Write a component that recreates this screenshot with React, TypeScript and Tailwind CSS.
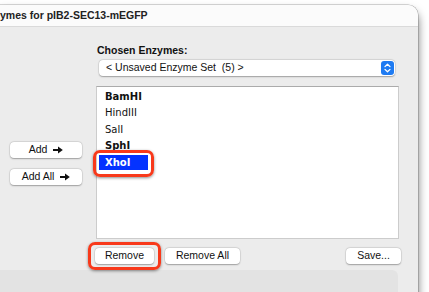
import React from "react";

const ui = { fontFamily: '"Liberation Sans", Arial, sans-serif' };
const mono = { fontFamily: '"DejaVu Sans", Verdana, sans-serif' };

function Arrow() {
  return (
    <svg width="10" height="8" viewBox="0 0 10 8" className="ml-[6px]">
      <path d="M0.5 4 H6" stroke="#111" strokeWidth="2" strokeLinecap="round" />
      <path d="M5 0.6 L9.8 4 L5 7.4 Z" fill="#111" />
    </svg>
  );
}

function Btn({ children, className = "" }: { children: React.ReactNode; className?: string }) {
  return (
    <div
      className={
        "h-[16px] bg-white rounded-[4px] flex items-center justify-center text-[10.5px] text-[#111] shadow-[0_0.5px_1.5px_rgba(0,0,0,0.3),0_0_0_0.5px_rgba(0,0,0,0.08)] " +
        className
      }
      style={ui}
    >
      {children}
    </div>
  );
}

const items: { name: string; bold: boolean; sel?: boolean }[] = [
  { name: "BamHI", bold: true },
  { name: "HindIII", bold: false },
  { name: "SalI", bold: false },
  { name: "SphI", bold: true },
  { name: "XhoI", bold: true, sel: true },
];

export default function App() {
  return (
    <div className="w-[429px] h-[292px] bg-white overflow-hidden pt-[5px]">
      <div className="w-[418px] h-[300px] bg-[#ececec] rounded-tr-[10px] flex flex-col shadow-[0_6px_10px_rgba(0,0,0,0.55),0_0_0_0.5px_rgba(0,0,0,0.3)]">
        <div
          className="h-[22px] shrink-0 bg-[#fbfbfb] rounded-tr-[10px] border-b border-[#dadada] flex items-center text-[10.5px] font-bold text-[#222]"
          style={ui}
        >
          ymes for pIB2-SEC13-mEGFP
        </div>
        <div className="flex">
          <div className="w-[96px] shrink-0 pl-[10px] pt-[115px] flex flex-col gap-[11px]">
            <Btn className="w-[72px]">
              Add
              <Arrow />
            </Btn>
            <Btn className="w-[72px]">
              Add All
              <Arrow />
            </Btn>
          </div>
          <div className="flex flex-col pt-[17px]">
            <div className="h-[13px] ml-[1px] text-[10.5px] font-bold text-[#111] leading-[13px]" style={ui}>
              Chosen Enzymes:
            </div>
            <div
              className="mt-[3px] ml-[3px] w-[296px] h-[16px] bg-white rounded-[4px] flex items-center justify-between pl-[7px] pr-[1px] shadow-[0_0.5px_1.5px_rgba(0,0,0,0.3),0_0_0_0.5px_rgba(0,0,0,0.08)]"
              style={ui}
            >
              <span className="text-[10.5px] text-[#111] whitespace-pre">{"< Unsaved Enzyme Set  (5) >"}</span>
              <div className="w-[13px] h-[14px] rounded-[3px] bg-[#1f7bf2] flex items-center justify-center">
                <svg width="7" height="10" viewBox="0 0 7 10">
                  <path d="M1 3.6 L3.5 1.2 L6 3.6" stroke="white" strokeWidth="1.3" fill="none" strokeLinecap="round" strokeLinejoin="round" />
                  <path d="M1 6.4 L3.5 8.8 L6 6.4" stroke="white" strokeWidth="1.3" fill="none" strokeLinecap="round" strokeLinejoin="round" />
                </svg>
              </div>
            </div>
            <div className="relative mt-[10px] w-[303px] h-[153px] bg-white border border-[#cccccc] border-t-[#ababab] pt-[0.75px]">
              {items.map((it) => (
                <div key={it.name} className="h-[16.5px] flex items-center pl-[2px]" style={mono}>
                  <span
                    className={
                      "text-[10px] pl-[6px] " +
                      (it.bold ? "font-bold " : "") +
                      (it.sel ? "bg-[#0433ff] text-white w-[49px] h-[15px] flex items-center" : "text-[#111]")
                    }
                  >
                    {it.name}
                  </span>
                </div>
              ))}
              <div className="absolute left-[-4px] top-[63px] w-[61px] h-[27px] rounded-[7px] border-[3px] border-[#f8391b] shadow-[0_1px_3px_rgba(0,0,0,0.45)]" />
            </div>
            <div className="flex mt-[9px] ml-[-1px] w-[306px]">
              <div className="relative">
                <Btn className="w-[59px]">Remove</Btn>
                <div className="absolute left-[-7px] top-[-6px] w-[73px] h-[28px] rounded-[7px] border-[3px] border-[#f8391b] shadow-[0_1px_3px_rgba(0,0,0,0.45)]" />
              </div>
              <Btn className="w-[75px] ml-[11px]">Remove All</Btn>
              <Btn className="w-[55px] ml-auto">Save...</Btn>
            </div>
          </div>
        </div>
        <div className="mt-[6px] w-[398px] h-[40px] bg-[#e3e3e3] rounded-tr-[6px]" />
      </div>
    </div>
  );
}
